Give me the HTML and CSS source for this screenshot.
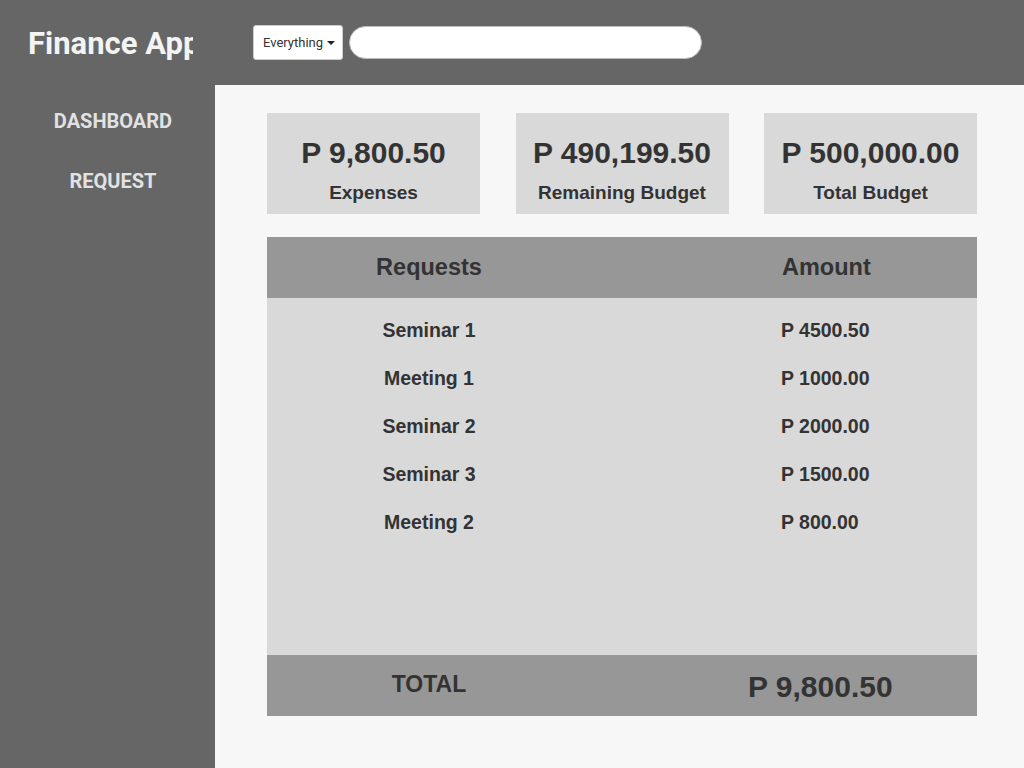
FILE: index.html
```html
<!DOCTYPE html>
<html>
<head>
<meta charset="utf-8">
<title>Finance App</title>
<link rel="stylesheet" href="styles.css">
</head>
<body>
<div class="app">
  <header class="topbar">
    <div class="brand">Finance App</div>
    <div class="select">Everything <span class="caret"></span></div>
    <div class="search"></div>
  </header>
  <nav class="sidebar">
    <a class="nav-link">DASHBOARD</a>
    <a class="nav-link">REQUEST</a>
  </nav>
  <main class="main">
    <section class="cards">
      <div class="card"><div class="card-amount">P 9,800.50</div><div class="card-label">Expenses</div></div>
      <div class="card"><div class="card-amount">P 490,199.50</div><div class="card-label">Remaining Budget</div></div>
      <div class="card"><div class="card-amount">P 500,000.00</div><div class="card-label">Total Budget</div></div>
    </section>
    <section class="table">
      <div class="thead">
        <div class="col-name">Requests</div>
        <div class="col-amount">Amount</div>
      </div>
      <div class="tbody">
        <div class="row"><div class="col-name">Seminar 1</div><div class="col-amount">P 4500.50</div></div>
        <div class="row"><div class="col-name">Meeting 1</div><div class="col-amount">P 1000.00</div></div>
        <div class="row"><div class="col-name">Seminar 2</div><div class="col-amount">P 2000.00</div></div>
        <div class="row"><div class="col-name">Seminar 3</div><div class="col-amount">P 1500.00</div></div>
        <div class="row"><div class="col-name">Meeting 2</div><div class="col-amount">P 800.00</div></div>
      </div>
      <div class="tfoot">
        <div class="col-name">TOTAL</div>
        <div class="col-total">P 9,800.50</div>
      </div>
    </section>
  </main>
</div>
</body>
</html>
```
FILE: styles.css
```css
* { box-sizing: border-box; }
html, body { margin: 0; padding: 0; }
body {
  font-family: "Liberation Sans", Arial, sans-serif;
  color: #333;
  background: #f7f7f7;
}
.app {
  display: grid;
  grid-template-columns: 215px 1fr;
  grid-template-rows: 85px 683px;
  width: 1024px;
  height: 768px;
  overflow: hidden;
}
.topbar {
  grid-column: 1 / 3;
  background: #666666;
  display: flex;
  align-items: center;
}
.brand {
  width: 193px;
  padding-left: 28px;
  overflow: hidden;
  white-space: nowrap;
  font-family: Roboto, sans-serif;
  font-weight: 700;
  font-size: 31px;
  color: #f4f4f4;
  margin-top: 2px;
}
.select {
  margin-left: 60px;
  width: 90px;
  height: 35px;
  background: #fff;
  border: 1px solid #ccc;
  border-radius: 3px;
  font-family: Roboto, sans-serif;
  font-size: 13px;
  color: #333;
  display: flex;
  align-items: center;
  padding-left: 9px;
  gap: 4px;
}
.caret {
  width: 0;
  height: 0;
  border-left: 4px solid transparent;
  border-right: 4px solid transparent;
  border-top: 4px solid #222;
}
.search {
  margin-left: 6px;
  width: 353px;
  height: 33px;
  background: #fff;
  border: 1px solid #bbb;
  border-radius: 17px;
}
.sidebar {
  background: #666666;
  padding-top: 6px;
  padding-left: 11px;
  display: flex;
  flex-direction: column;
}
.nav-link {
  height: 60px;
  line-height: 60px;
  text-align: center;
  font-family: Roboto, sans-serif;
  font-weight: 700;
  font-size: 20px;
  color: #e2e2e2;
}
.main {
  background: #f7f7f7;
  padding: 28px 47px 0 52px;
}
.cards {
  display: flex;
  justify-content: space-between;
}
.card {
  width: 213px;
  height: 101px;
  background: #d9d9d9;
  padding: 20px 16px 0;
  text-align: center;
  overflow: hidden;
  white-space: nowrap;
}
.card-amount {
  font-weight: 700;
  font-size: 30px;
  line-height: 40px;
  overflow: hidden;
}
.card-label {
  margin-top: 8px;
  font-weight: 700;
  font-size: 19px;
  line-height: 24px;
  overflow: hidden;
}
.table {
  margin-top: 23px;
  width: 710px;
}
.thead, .tfoot {
  height: 61px;
  background: #979797;
  display: grid;
  grid-template-columns: 324px 1fr;
  align-items: center;
  font-weight: 700;
}
.thead { font-size: 23.5px; }
.thead .col-amount { padding-left: 191px; }
.tbody {
  height: 357px;
  background: #d9d9d9;
  padding-top: 8px;
}
.row {
  height: 48px;
  display: grid;
  grid-template-columns: 324px 1fr;
  align-items: center;
  font-weight: 700;
  font-size: 19.5px;
}
.col-name { text-align: center; }
.row .col-amount { padding-left: 190px; }
.tfoot .col-name { font-size: 23px; margin-top: -2px; }
.tfoot .col-total {
  font-size: 30px;
  padding-left: 157px;
  margin-top: 2px;
}
```
